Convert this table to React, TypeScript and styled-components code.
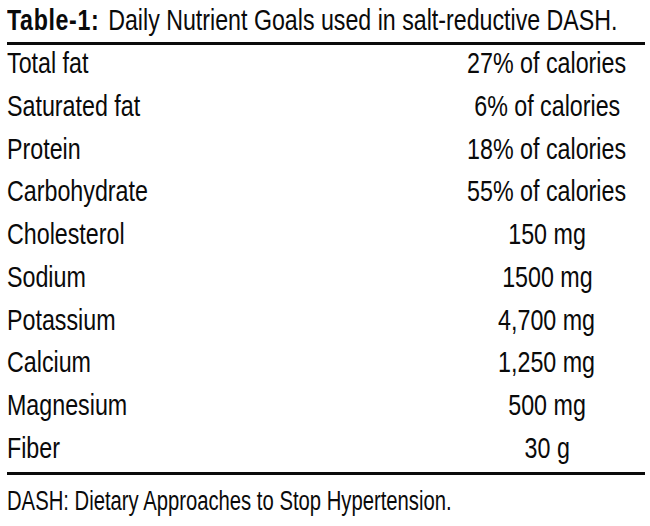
import React from "react";
import styled, { createGlobalStyle } from "styled-components";

const Global = createGlobalStyle`
  html, body { margin: 0; padding: 0; background: #ffffff; overflow: hidden; }
  body { font-family: "Liberation Sans", Arial, sans-serif; color: #0a0a0a; }
`;

const Page = styled.div`
  width: 638px;
  padding: 2px 5px 0 7px;
  display: flex;
  flex-direction: column;
`;

/* Condensed type: the reference is set in a condensed sans, emulated by squeezing Liberation Sans. */
const Squeeze = styled.span<{ $k: number; $origin?: string }>`
  display: inline-block;
  flex: none;
  white-space: nowrap;
  transform: scaleX(${(p) => p.$k});
  transform-origin: ${(p) => p.$origin ?? "left center"};
`;

const Title = styled.div`
  font-size: 29px;
  line-height: 36px;
  white-space: nowrap;
  overflow: hidden;
`;

const TitleLabel = styled.span`
  font-weight: 700;
  letter-spacing: 0.8px;
  margin-right: 3px;
`;

const Rule = styled.div<{ $gapTop: number }>`
  height: 3px;
  background: #0a0a0a;
  margin-top: ${(p) => p.$gapTop}px;
`;

const Table = styled.div`
  display: grid;
  grid-template-columns: 1fr 196px;
  grid-auto-rows: 32px;
  row-gap: 10.78px;
  margin-top: 2px;
  font-size: 30px;
  line-height: 32px;
`;

const Name = styled.div`
  white-space: nowrap;
`;

const Value = styled.div`
  display: flex;
  justify-content: center;
  white-space: nowrap;
`;

const Note = styled.div`
  margin-top: 11px;
  font-size: 27px;
  line-height: 30px;
  white-space: nowrap;
  overflow: hidden;
`;

const rows: [string, string][] = [
  ["Total fat", "27% of calories"],
  ["Saturated fat", "6% of calories"],
  ["Protein", "18% of calories"],
  ["Carbohydrate", "55% of calories"],
  ["Cholesterol", "150 mg"],
  ["Sodium", "1500 mg"],
  ["Potassium", "4,700 mg"],
  ["Calcium", "1,250 mg"],
  ["Magnesium", "500 mg"],
  ["Fiber", "30 g"],
];

export default function App() {
  return (
    <>
      <Global />
      <Page>
        <Title>
          <Squeeze $k={0.8}>
            <TitleLabel>Table-1:</TitleLabel> Daily Nutrient Goals used in salt-reductive DASH.
          </Squeeze>
        </Title>
        <Rule $gapTop={4} />
        <Table>
          {rows.map(([n, v]) => (
            <React.Fragment key={n}>
              <Name>
                <Squeeze $k={0.775}>{n}</Squeeze>
              </Name>
              <Value>
                <Squeeze $k={0.775} $origin="center center">
                  {v}
                </Squeeze>
              </Value>
            </React.Fragment>
          ))}
        </Table>
        <Rule $gapTop={8} />
        <Note>
          <Squeeze $k={0.75}>DASH: Dietary Approaches to Stop Hypertension.</Squeeze>
        </Note>
      </Page>
    </>
  );
}
